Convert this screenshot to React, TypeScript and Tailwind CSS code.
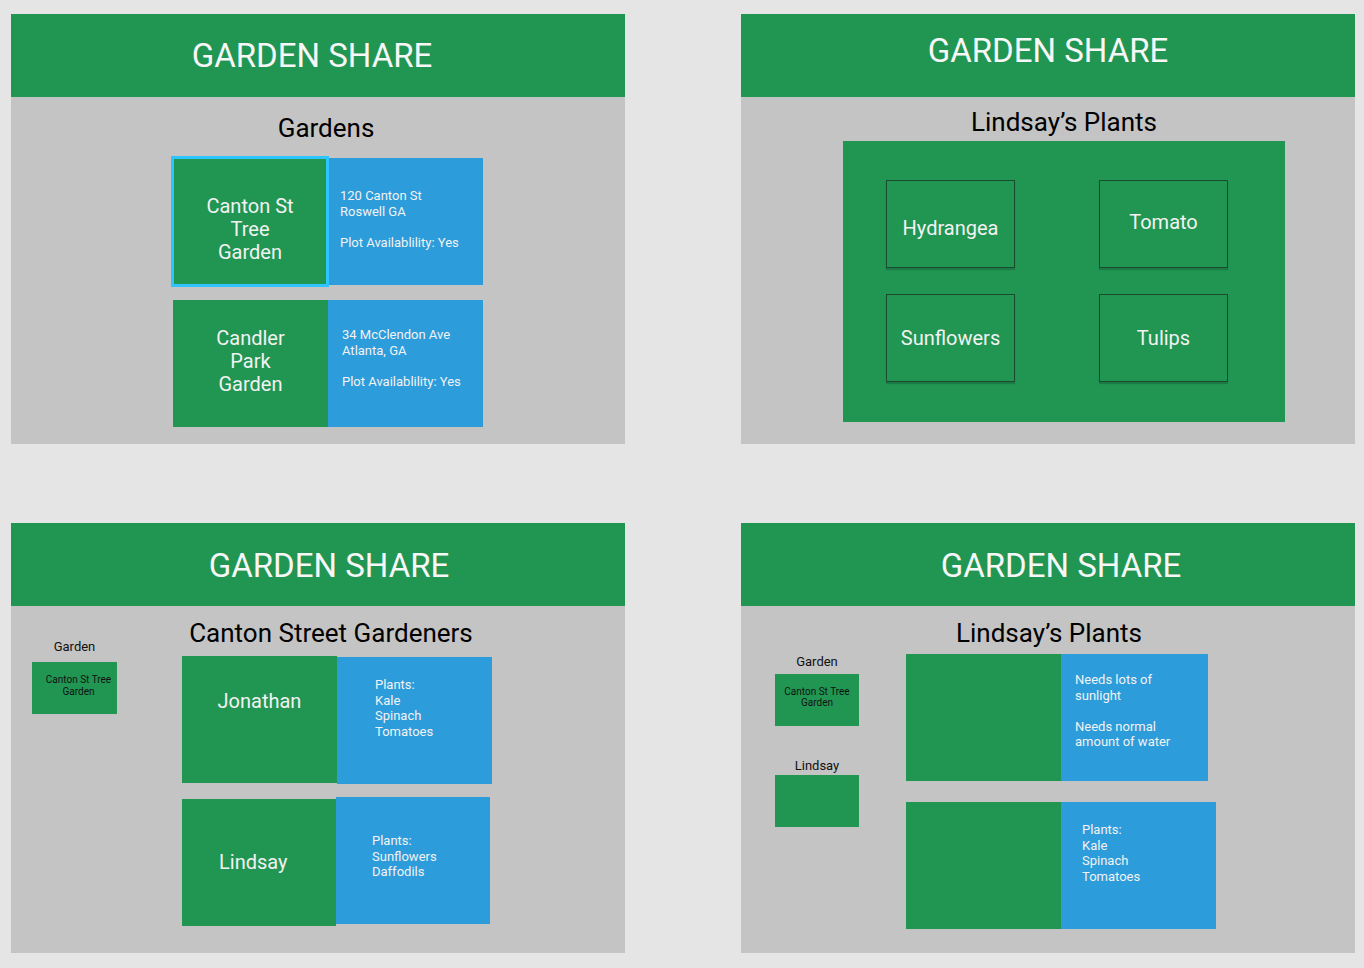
import React from 'react';

const GREEN = 'bg-[#219653]';
const BLUE = 'bg-[#2d9cdb]';

function Header({ offset }: { offset: string }) {
  return (
    <div className={`h-[83px] ${GREEN} flex items-center justify-center text-[33px] leading-[38px] text-[#f7f7f7] ${offset}`}>
      GARDEN SHARE
    </div>
  );
}

function InfoText({ text, className }: { text: string; className: string }) {
  return (
    <p className={`whitespace-pre-line text-[13px] leading-[15.5px] text-[#f2f2f2] ${className}`}>{text}</p>
  );
}

function GardensScreen() {
  return (
    <div className="flex-1 bg-[#c4c4c4] flex flex-col pt-[16px]">
      <h2 className="pl-[16px] text-center text-[26px] leading-[30px] text-black">Gardens</h2>
      <div className="ml-[160px] mt-[13px] flex flex-col gap-[13px]">
        <div className="flex items-center">
          <div className={`w-[158px] h-[131px] border-[3px] border-[#2ec4ff] ${GREEN} pt-[36px] text-center text-[20px] leading-[23px] text-[#f2f2f2]`}>
            Canton St
            <br />
            Tree
            <br />
            Garden
          </div>
          <div className={`w-[154px] h-[127px] ${BLUE}`}>
            <InfoText className="pt-[30px] pl-[11px]" text={'120 Canton St\nRoswell GA\n\nPlot Availablility: Yes'} />
          </div>
        </div>
        <div className="flex ml-[2px]">
          <div className={`w-[155px] h-[127px] ${GREEN} pt-[27px] text-center text-[20px] leading-[23px] text-[#f2f2f2]`}>
            Candler
            <br />
            Park
            <br />
            Garden
          </div>
          <div className={`w-[155px] h-[127px] ${BLUE}`}>
            <InfoText className="pt-[27px] pl-[14px]" text={'34 McClendon Ave\nAtlanta, GA\n\nPlot Availablility: Yes'} />
          </div>
        </div>
      </div>
    </div>
  );
}

function PlantBox({ name, tweak }: { name: string; tweak: string }) {
  return (
    <div className={`h-[88px] border border-[#1c4a2f] shadow-[0_2px_1px_rgba(0,0,0,0.18)] ${GREEN} flex items-center justify-center text-[20px] leading-[23px] text-[#f2f2f2] ${tweak}`}>
      {name}
    </div>
  );
}

function PlantsGridScreen() {
  return (
    <div className="flex-1 bg-[#c4c4c4] flex flex-col pt-[10px]">
      <h2 className="pl-[32px] text-center text-[26px] leading-[30px] text-black">Lindsay’s Plants</h2>
      <div className={`mt-[4px] ml-[102px] w-[442px] h-[281px] ${GREEN} pt-[39px] pl-[43px] grid grid-cols-[129px_129px] gap-x-[84px] gap-y-[26px] content-start`}>
        <PlantBox name="Hydrangea" tweak="pt-[8px]" />
        <PlantBox name="Tomato" tweak="pb-[4px]" />
        <PlantBox name="Sunflowers" tweak="" />
        <PlantBox name="Tulips" tweak="" />
      </div>
    </div>
  );
}

function SmallGarden({ className }: { className: string }) {
  return (
    <div className={`h-[52px] ${GREEN} text-center text-[10px] text-[#111] ${className}`}>
      Canton St Tree
      <br />
      Garden
    </div>
  );
}

function GardenersScreen() {
  return (
    <div className="flex-1 bg-[#c4c4c4] flex">
      <div className="ml-[21px] w-[85px] pt-[33px]">
        <p className="text-center text-[13px] leading-[16px] text-[#111]">Garden</p>
        <SmallGarden className="mt-[7px] pt-[12px] pl-[8px] leading-[12px]" />
      </div>
      <div className="ml-[65px] w-[310px] pt-[12px]">
        <h2 className="pr-[12px] text-center text-[26px] leading-[30px] text-black whitespace-nowrap">Canton Street Gardeners</h2>
        <div className="mt-[8px] flex flex-col gap-[13px]">
          <div className="flex items-start">
            <div className={`w-[155px] h-[127px] ${GREEN} pt-[34px] text-center text-[20px] leading-[23px] text-[#f2f2f2]`}>Jonathan</div>
            <div className={`mt-[1px] w-[155px] h-[127px] ${BLUE}`}>
              <InfoText className="pt-[20px] pl-[38px]" text={'Plants:\nKale\nSpinach\nTomatoes'} />
            </div>
          </div>
          <div className="flex items-start">
            <div className={`mt-[2px] w-[154px] h-[127px] ${GREEN} flex items-center pl-[37px] text-[20px] leading-[23px] text-[#f2f2f2]`}>Lindsay</div>
            <div className={`w-[154px] h-[127px] ${BLUE}`}>
              <InfoText className="pt-[36px] pl-[36px]" text={'Plants:\nSunflowers\nDaffodils'} />
            </div>
          </div>
        </div>
      </div>
    </div>
  );
}

function PlantDetailScreen() {
  return (
    <div className="flex-1 bg-[#c4c4c4] flex flex-col pt-[12px]">
      <h2 className="pl-[2px] text-center text-[26px] leading-[30px] text-black">Lindsay’s Plants</h2>
      <div className="mt-[6px] flex">
        <div className="ml-[34px] w-[84px]">
          <p className="text-center text-[13px] leading-[16px] text-[#111]">Garden</p>
          <SmallGarden className="mt-[4px] pt-[12px] leading-[11px]" />
          <p className="mt-[32px] text-center text-[13px] leading-[16px] text-[#111]">Lindsay</p>
          <div className={`mt-[1px] h-[52px] ${GREEN}`} />
        </div>
        <div className="ml-[47px] flex flex-col gap-[21px]">
          <div className="flex">
            <div className={`w-[155px] h-[127px] ${GREEN}`} />
            <div className={`w-[147px] h-[127px] ${BLUE}`}>
              <InfoText className="pt-[18px] pl-[14px]" text={'Needs lots of\nsunlight\n\nNeeds normal\namount of water'} />
            </div>
          </div>
          <div className="flex">
            <div className={`w-[155px] h-[127px] ${GREEN}`} />
            <div className={`w-[155px] h-[127px] ${BLUE}`}>
              <InfoText className="pt-[20px] pl-[21px]" text={'Plants:\nKale\nSpinach\nTomatoes'} />
            </div>
          </div>
        </div>
      </div>
    </div>
  );
}

export default function App() {
  return (
    <div className="w-[1364px] h-[968px] bg-[#e5e5e5] pt-[14px] pl-[11px] grid grid-cols-[614px_614px] gap-x-[116px] gap-y-[79px] content-start font-['Roboto',sans-serif]">
      <div className="w-[614px] h-[430px] flex flex-col">
        <Header offset="pr-[12px]" />
        <GardensScreen />
      </div>
      <div className="w-[614px] h-[430px] flex flex-col">
        <Header offset="pb-[10px]" />
        <PlantsGridScreen />
      </div>
      <div className="w-[614px] h-[430px] flex flex-col">
        <Header offset="pl-[22px] pt-[3px]" />
        <GardenersScreen />
      </div>
      <div className="w-[614px] h-[430px] flex flex-col">
        <Header offset="pl-[26px] pt-[2px]" />
        <PlantDetailScreen />
      </div>
    </div>
  );
}
